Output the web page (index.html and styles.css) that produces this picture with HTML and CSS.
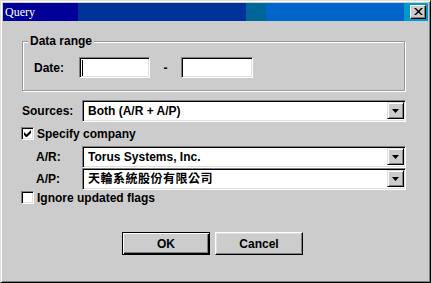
FILE: index.html
```html
<!DOCTYPE html>
<html>
<head>
<meta charset="utf-8">
<link rel="stylesheet" href="styles.css">
</head>
<body>
<div class="window">
  <div class="titlebar">
    <span class="title">Query</span>
    <span class="close"><svg width="9" height="7" viewBox="0 0 9 7"><path d="M0 0h2l2.5 2.5L7 0h2L5.5 3.5 9 7H7L4.5 4.5 2 7H0l3.5-3.5z" fill="#000"/></svg></span>
  </div>
  <div class="content">
    <div class="group">
      <span class="legend">Data range</span>
      <div class="date-row">
        <span class="date-label">Date:</span>
        <span class="field"><span class="caret"></span></span>
        <span class="dash">-</span>
        <span class="field field2"></span>
      </div>
    </div>

    <div class="row sources">
      <span class="label">Sources:</span>
      <div class="combo"><span class="combo-text">Both (A/R + A/P)</span><span class="drop"><svg width="7" height="4" viewBox="0 0 7 4"><path d="M0 0h7L3.5 4z" fill="#000"/></svg></span></div>
    </div>

    <div class="check-row specify">
      <span class="check"><svg width="7" height="7" viewBox="0 0 7 7"><path d="M0 2v3l2 2h1l4-4V0L2.5 4.5z" fill="#000"/></svg></span>
      <span class="check-label">Specify company</span>
    </div>

    <div class="row ar">
      <span class="label sub">A/R:</span>
      <div class="combo"><span class="combo-text">Torus Systems, Inc.</span><span class="drop"><svg width="7" height="4" viewBox="0 0 7 4"><path d="M0 0h7L3.5 4z" fill="#000"/></svg></span></div>
    </div>

    <div class="row ap">
      <span class="label sub">A/P:</span>
      <div class="combo"><span class="combo-text cjk">天輪系統股份有限公司</span><span class="drop"><svg width="7" height="4" viewBox="0 0 7 4"><path d="M0 0h7L3.5 4z" fill="#000"/></svg></span></div>
    </div>

    <div class="check-row ignore">
      <span class="check"></span>
      <span class="check-label">Ignore updated flags</span>
    </div>

    <div class="buttons">
      <span class="btn default">OK</span>
      <span class="btn">Cancel</span>
    </div>
  </div>
</div>
</body>
</html>
```

FILE: styles.css
```css
html, body {
  margin: 0;
  padding: 0;
  background: #cccccc;
}

.window {
  width: 431px;
  height: 283px;
  box-sizing: border-box;
  background: #cccccc;
  border: 1px solid;
  border-color: #dfdfdf #000 #000 #dfdfdf;
  box-shadow: inset 1px 1px 0 #fff, inset -1px -1px 0 #808080;
  padding: 2px;
  display: flex;
  flex-direction: column;
  font: bold 12px "Liberation Sans", Arial, sans-serif;
  color: #000;
}

.titlebar {
  height: 18px;
  flex: none;
  display: flex;
  align-items: center;
  justify-content: space-between;
  background: linear-gradient(to right, #000099 0 75px, #003399 75px 243px, #006699 243px 263px, #0066cc 263px 401px, #0099cc 401px);
}

.title {
  color: #fff;
  font: normal 12px "Liberation Serif", "Times New Roman", serif;
  padding-left: 2px;
  line-height: 18px;
}

.close {
  width: 16px;
  height: 14px;
  box-sizing: border-box;
  margin-right: 2px;
  background: #cccccc;
  border: 1px solid;
  border-color: #fff #000 #000 #fff;
  box-shadow: inset -1px -1px 0 #808080;
  display: flex;
  align-items: center;
  justify-content: center;
}

.close svg { display: block; margin: 0 0 1px 0; }

.content {
  padding: 20px 22px 0 19px;
  display: flex;
  flex-direction: column;
}

.group {
  position: relative;
  height: 50px;
  box-sizing: border-box;
  margin-right: 1px;
  border: 1px solid #999999;
  box-shadow: 1px 1px 0 #fff, inset 1px 1px 0 #fff;
}

.legend {
  position: absolute;
  top: -7px;
  left: 5px;
  padding: 0 2px;
  background: #cccccc;
  line-height: 13px;
}

.date-row {
  display: flex;
  align-items: center;
  padding: 15px 0 0 11px;
}

.date-label {
  width: 45px;
}

.field {
  width: 71px;
  height: 21px;
  box-sizing: border-box;
  background: #fff;
  border: 1px solid;
  border-color: #808080 #fff #fff #808080;
  box-shadow: inset 1px 1px 0 #000, inset -1px -1px 0 #dfdfdf;
  display: flex;
  align-items: center;
  padding-left: 2px;
}

.field2 { width: 72px; }

.caret {
  width: 1px;
  height: 16px;
  background: #000;
}

.dash {
  width: 31px;
  text-align: center;
}

.row {
  display: flex;
  align-items: center;
  height: 22px;
}

.sources { margin-top: 9px; }
.ar { margin-top: 6px; }
.ap { margin-top: 0; }

.label {
  width: 60px;
  flex: none;
}

.label.sub {
  width: 46px;
  padding-left: 14px;
}

.combo {
  flex: 1;
  height: 22px;
  box-sizing: border-box;
  background: #fff;
  border: 1px solid;
  border-color: #808080 #fff #fff #808080;
  box-shadow: inset 1px 1px 0 #000, inset -1px -1px 0 #dfdfdf;
  display: flex;
  align-items: center;
  justify-content: space-between;
  padding: 1px 1px 1px 5px;
}

.combo-text {
  line-height: 18px;
}

.cjk {
  font-family: "Liberation Sans", "Noto Sans CJK TC", sans-serif;
  letter-spacing: 0.5px;
}

.drop {
  align-self: flex-start;
  width: 17px;
  height: 17px;
  box-sizing: border-box;
  background: #cccccc;
  border: 1px solid;
  border-color: #dfdfdf #000 #000 #dfdfdf;
  box-shadow: inset 1px 1px 0 #fff, inset -1px -1px 0 #808080;
  display: flex;
  align-items: center;
  justify-content: center;
}

.drop svg { display: block; }

.check-row {
  display: flex;
  align-items: center;
  height: 13px;
  margin-left: -1px;
}

.specify { margin-top: 5px; }
.ignore { margin-top: 1px; }

.check {
  width: 13px;
  height: 13px;
  box-sizing: border-box;
  background: #fff;
  border: 1px solid;
  border-color: #808080 #fff #fff #808080;
  box-shadow: inset 1px 1px 0 #000, inset -1px -1px 0 #dfdfdf;
  display: flex;
  align-items: center;
  justify-content: center;
}

.check svg { display: block; }

.check-label {
  margin-left: 3px;
}

.buttons {
  display: flex;
  gap: 5px;
  margin-top: 28px;
  padding-left: 100px;
}

.btn {
  width: 88px;
  height: 23px;
  box-sizing: border-box;
  background: #cccccc;
  border: 1px solid;
  border-color: #fff #000 #000 #fff;
  box-shadow: inset -1px -1px 0 #808080, inset 1px 1px 0 #dfdfdf;
  display: flex;
  align-items: center;
  justify-content: center;
}

.btn.default {
  border-color: #000;
  box-shadow: inset 1px 1px 0 #fff, inset -1px -1px 0 #000, inset -2px -2px 0 #808080;
}
```
